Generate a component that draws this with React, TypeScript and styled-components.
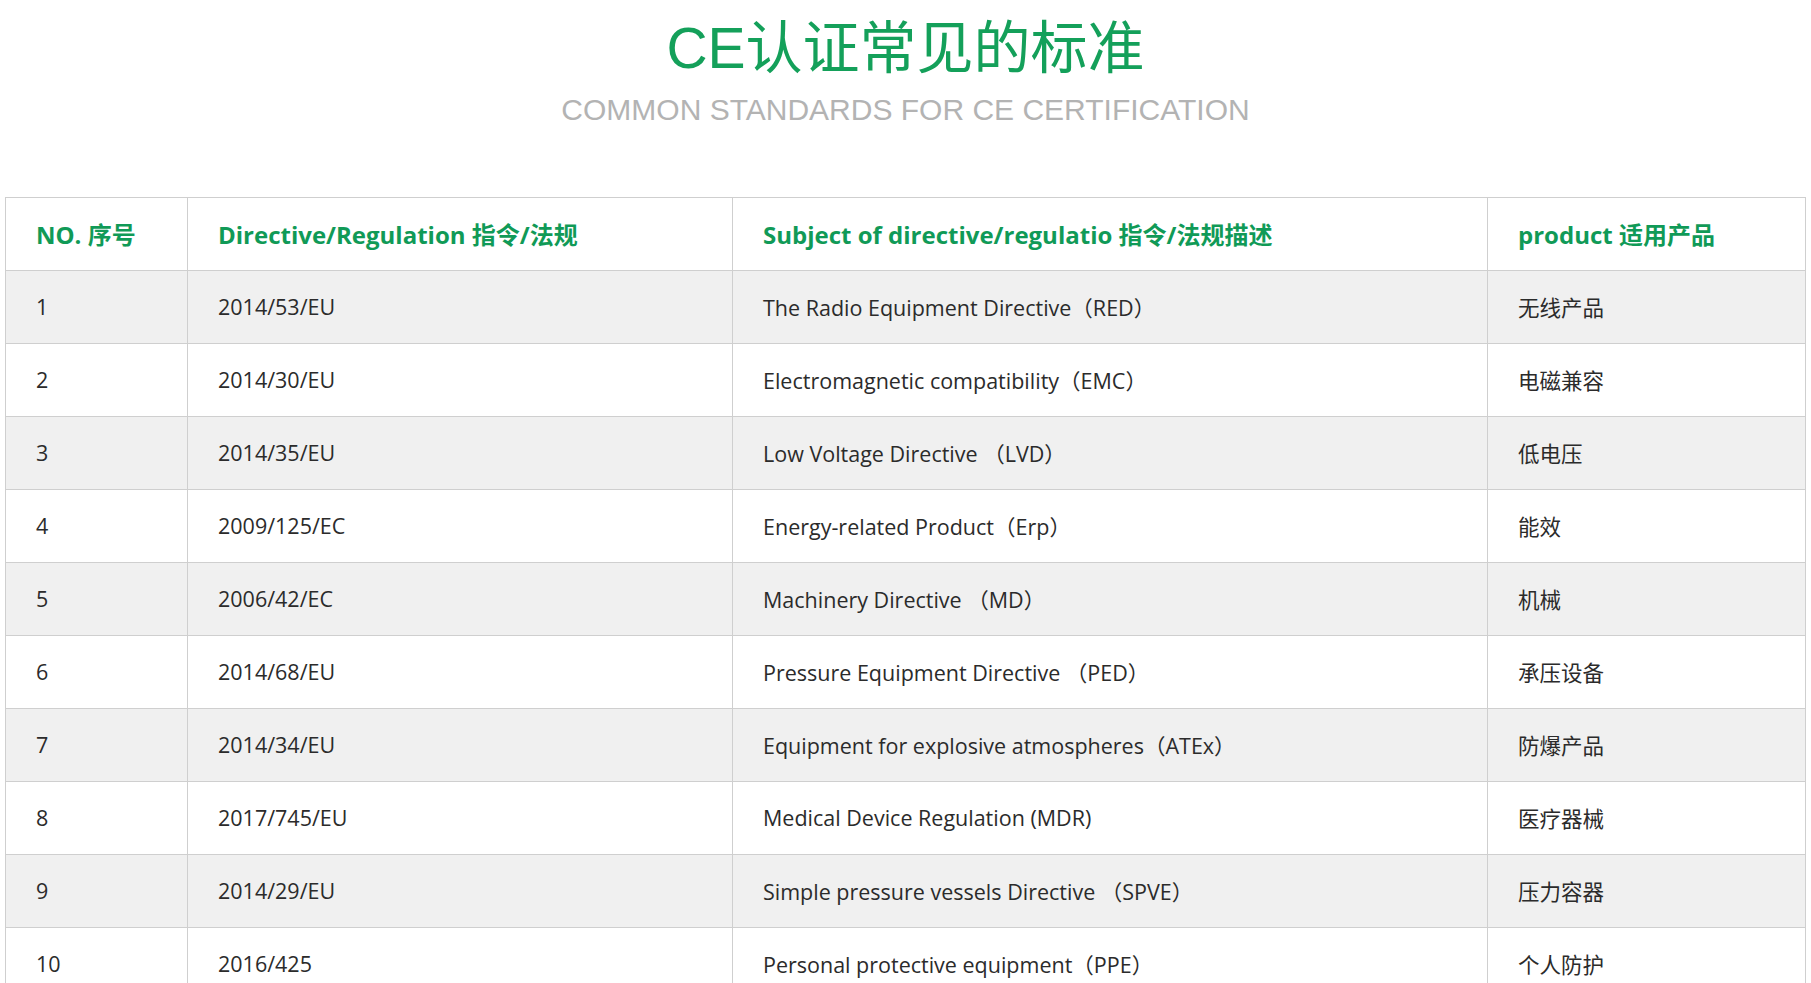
import React from "react";
import styled, { createGlobalStyle } from "styled-components";

const GlobalStyle = createGlobalStyle`
  html, body {
    margin: 0;
    padding: 0;
    background: #ffffff;
  }
  body {
    font-family: "Open Sans", "Noto Sans CJK SC", sans-serif;
  }
`;

const Page = styled.div`
  width: 1811px;
  display: flex;
  flex-direction: column;
  align-items: stretch;
`;

const Heading = styled.header`
  display: flex;
  flex-direction: column;
  align-items: center;
  padding-top: 15px;
`;

const Title = styled.h1`
  margin: 0;
  font-family: "Liberation Sans", "Noto Sans CJK SC", sans-serif;
  font-weight: 400;
  font-size: 57px;
  line-height: 66px;
  color: #14a05a;
`;

const Subtitle = styled.p`
  margin: 11px 0 0;
  font-family: "Liberation Sans", Arial, sans-serif;
  font-size: 30px;
  line-height: 36px;
  color: #b3b3b3;
`;

const Table = styled.table`
  margin: 69px 0 0 5px;
  width: 1800px;
  border-collapse: collapse;
  table-layout: fixed;
`;

const Col = styled.col<{ $w: number }>`
  width: ${(p) => p.$w}px;
`;

const HeadCell = styled.th`
  box-sizing: border-box;
  height: 73px;
  padding: 0 0 2px 30px;
  border: 1px solid #cfcfcf;
  text-align: left;
  font-family: "Open Sans", "Noto Sans CJK SC", sans-serif;
  font-weight: 700;
  font-size: 24px;
  color: #109a57;
  background: #ffffff;
  white-space: nowrap;
`;

const Row = styled.tr<{ $shade: boolean }>`
  background: ${(p) => (p.$shade ? "#f0f0f0" : "#ffffff")};
`;

const Cell = styled.td`
  box-sizing: border-box;
  height: 73px;
  padding: 0 0 2px 30px;
  border: 1px solid #cfcfcf;
  font-family: "Open Sans", "Noto Sans CJK SC", sans-serif;
  font-size: 21.5px;
  color: #2b2b2b;
  vertical-align: middle;
  white-space: nowrap;
`;

const columns = [
  { label: "NO. 序号", w: 182 },
  { label: "Directive/Regulation 指令/法规", w: 545 },
  { label: "Subject of directive/regulatio 指令/法规描述", w: 755 },
  { label: "product 适用产品", w: 318 },
];

const rows: [string, string, string, string][] = [
  ["1", "2014/53/EU", "The Radio Equipment Directive（RED）", "无线产品"],
  ["2", "2014/30/EU", "Electromagnetic compatibility（EMC）", "电磁兼容"],
  ["3", "2014/35/EU", "Low Voltage Directive （LVD）", "低电压"],
  ["4", "2009/125/EC", "Energy-related Product（Erp）", "能效"],
  ["5", "2006/42/EC", "Machinery Directive （MD）", "机械"],
  ["6", "2014/68/EU", "Pressure Equipment Directive （PED）", "承压设备"],
  ["7", "2014/34/EU", "Equipment for explosive atmospheres（ATEx）", "防爆产品"],
  ["8", "2017/745/EU", "Medical Device Regulation (MDR)", "医疗器械"],
  ["9", "2014/29/EU", "Simple pressure vessels Directive （SPVE）", "压力容器"],
  ["10", "2016/425", "Personal protective equipment（PPE）", "个人防护"],
];

export default function App() {
  return (
    <>
      <GlobalStyle />
      <Page>
        <Heading>
          <Title>CE认证常见的标准</Title>
          <Subtitle>COMMON STANDARDS FOR CE CERTIFICATION</Subtitle>
        </Heading>
        <Table>
          <colgroup>
            {columns.map((c) => (
              <Col key={c.label} $w={c.w} />
            ))}
          </colgroup>
          <thead>
            <tr>
              {columns.map((c) => (
                <HeadCell key={c.label}>{c.label}</HeadCell>
              ))}
            </tr>
          </thead>
          <tbody>
            {rows.map((r, i) => (
              <Row key={r[0]} $shade={i % 2 === 0}>
                {r.map((v, j) => (
                  <Cell key={j}>{v}</Cell>
                ))}
              </Row>
            ))}
          </tbody>
        </Table>
      </Page>
    </>
  );
}
